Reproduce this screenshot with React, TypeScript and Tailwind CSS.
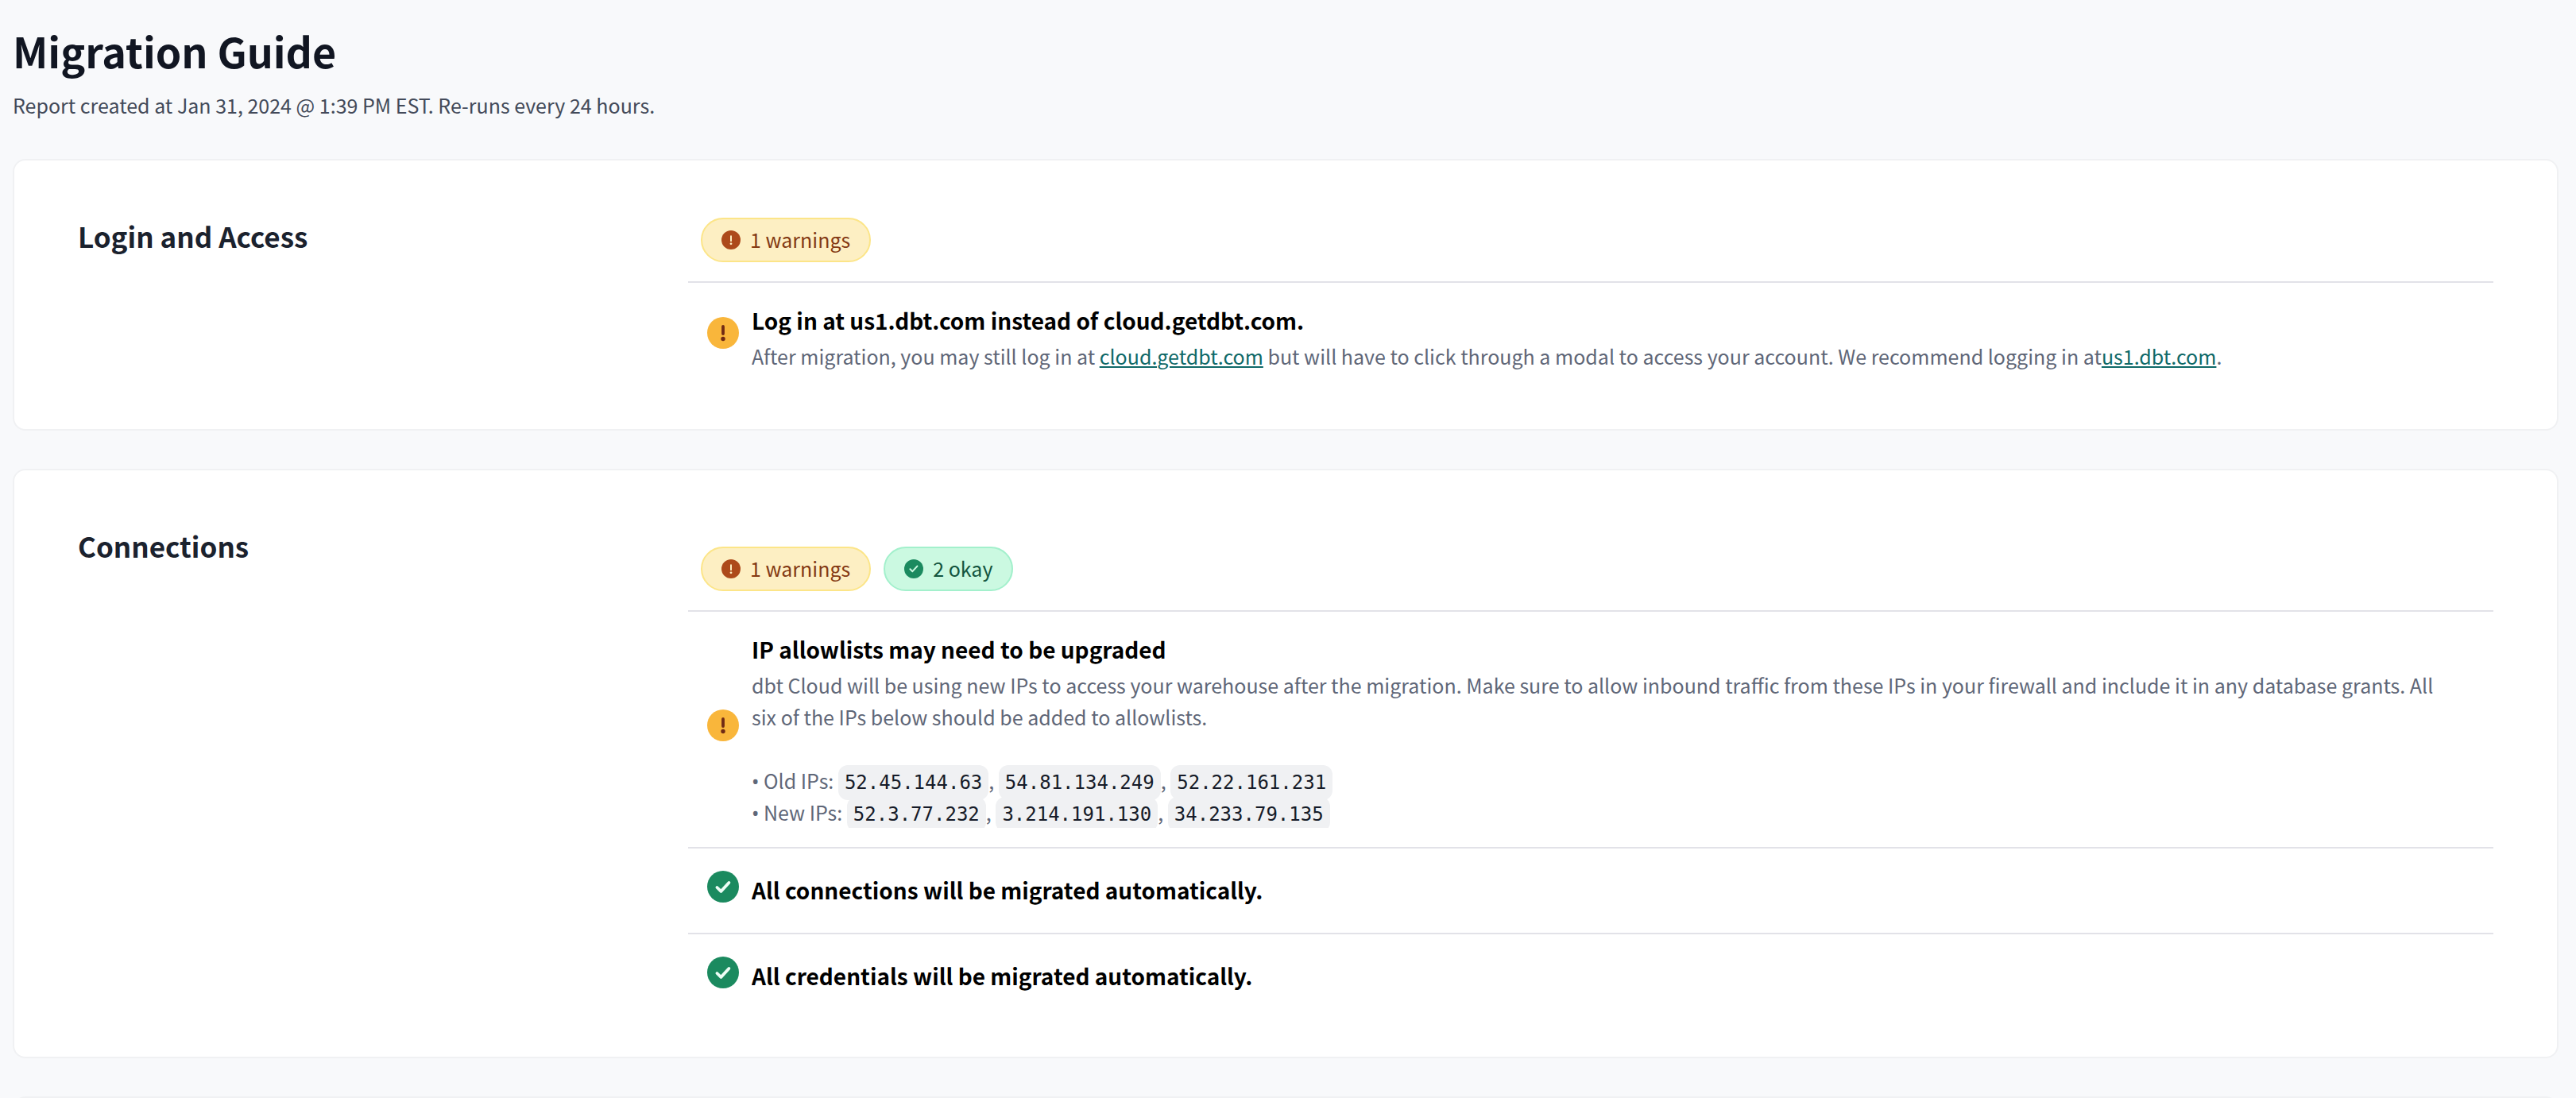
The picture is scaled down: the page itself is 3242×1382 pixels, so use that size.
import type { ReactNode } from "react";

type Tone = "warning" | "okay";

function WarningBadgeIcon() {
  return (
    <svg viewBox="0 0 24 24" className="size-6 shrink-0" aria-hidden="true">
      <circle cx="12" cy="12" r="12" fill="#ad4a1b" />
      <path d="M12 7.2v6" stroke="#fdefc3" strokeWidth="2" strokeLinecap="round" />
      <circle cx="12" cy="16.8" r="1.4" fill="#fdefc3" />
    </svg>
  );
}

function OkayBadgeIcon() {
  return (
    <svg viewBox="0 0 24 24" className="size-6 shrink-0" aria-hidden="true">
      <circle cx="12" cy="12" r="12" fill="#1b8a5f" />
      <path d="M7.4 12.2l3 3 6-6.6" fill="none" stroke="#cbf9e1" strokeWidth="2" strokeLinecap="round" strokeLinejoin="round" />
    </svg>
  );
}

function StatusIcon({ tone }: { tone: Tone }) {
  return (
    <div className="shrink-0 pt-1 pb-3.5">
      {tone === "warning" ? (
        <svg viewBox="0 0 40 40" className="size-10" role="img" aria-label="Warning">
          <circle cx="20" cy="20" r="20" fill="#f9b63b" />
          <path d="M20 12v9" stroke="#702a14" strokeWidth="3.8" strokeLinecap="round" />
          <circle cx="20" cy="27.5" r="2.7" fill="#702a14" />
        </svg>
      ) : (
        <svg viewBox="0 0 40 40" className="size-10" role="img" aria-label="Okay">
          <circle cx="20" cy="20" r="20" fill="#1b8a5f" />
          <path d="M12.4 21l5 4.9 10-10.9" fill="none" stroke="#ecfdf5" strokeWidth="3.8" strokeLinecap="round" strokeLinejoin="round" />
        </svg>
      )}
    </div>
  );
}

function Badge({ tone, children }: { tone: Tone; children: ReactNode }) {
  const colors =
    tone === "warning"
      ? "border-[#fce588] bg-[#fdefc3] text-[#843a14]"
      : "border-[#a3f0cc] bg-[#cbf9e1] text-[#14553f]";
  return (
    <span className={`flex h-14 items-center gap-3 rounded-full border-2 px-6 text-[25px] ${colors}`}>
      {tone === "warning" ? <WarningBadgeIcon /> : <OkayBadgeIcon />}
      {children}
    </span>
  );
}

function Item({ tone, title, children }: { tone: Tone; title: string; children?: ReactNode }) {
  return (
    <li className="flex items-center gap-4 border-t-2 border-[#e2e2e8] py-6 pr-12 pl-6">
      <StatusIcon tone={tone} />
      <div className="min-w-0 flex-1 overflow-hidden">
        <h3 className="pb-0.5 text-[28px] leading-[46px] font-bold text-black">{title}</h3>
        {children && <div className="text-[25px] leading-10 text-[#5f6778]">{children}</div>}
      </div>
    </li>
  );
}

function Card({ title, children }: { title: string; children?: ReactNode }) {
  return (
    <section className="grid grid-cols-4 gap-x-8 rounded-2xl border-2 border-[#f0f1f3] bg-white px-20 py-12">
      <h2 className="pt-6 text-[35px] leading-[46px] font-bold text-[#1b222e]">{title}</h2>
      <div className="col-span-3">{children}</div>
    </section>
  );
}

function TextLink({ href, children }: { href: string; children: ReactNode }) {
  return (
    <a href={href} className="text-[#0f6968] underline decoration-2 underline-offset-2">
      {children}
    </a>
  );
}

function Code({ children }: { children: ReactNode }) {
  return (
    <code className="rounded-xl bg-[#f0f1f3] p-2 font-['DejaVu_Sans_Mono',monospace] text-[24px] leading-none text-[#161b28]">
      {children}
    </code>
  );
}

function IpLine({ label, ips }: { label: string; ips: string[] }) {
  return (
    <li>
      <span className="font-['Noto_Sans',sans-serif] leading-none">•</span> {label}:{" "}
      {ips.map((ip, i) => (
        <span key={ip}>
          {i > 0 && ", "}
          <Code>{ip}</Code>
        </span>
      ))}
    </li>
  );
}

export default function App() {
  return (
    <div className="h-screen overflow-hidden bg-[#f8f9fb] font-['Noto_Sans_CJK_SC',sans-serif]">
      <main className="flex flex-col gap-12 pr-[22px] pl-4">
        <header className="pt-7">
          <h1 className="text-[52px] leading-[72px] font-bold text-[#111622]">Migration Guide</h1>
          <p className="mt-3 text-[25px] leading-10 text-[#434a59]">
            Report created at Jan 31, 2024 @ 1:39 PM EST. Re-runs every 24 hours.
          </p>
        </header>

        <Card title="Login and Access">
          <div className="flex gap-4 px-4 py-6">
            <Badge tone="warning">1 warnings</Badge>
          </div>
          <ul>
            <Item tone="warning" title="Log in at us1.dbt.com instead of cloud.getdbt.com.">
              After migration, you may still log in at{" "}
              <TextLink href="https://cloud.getdbt.com">cloud.getdbt.com</TextLink> but will have to click through a
              modal to access your account. We recommend logging in at
              <TextLink href="https://us1.dbt.com">us1.dbt.com</TextLink>.
            </Item>
          </ul>
        </Card>

        <Card title="Connections">
          <div className="flex gap-4 px-4 pt-12 pb-6">
            <Badge tone="warning">1 warnings</Badge>
            <Badge tone="okay">2 okay</Badge>
          </div>
          <ul>
            <Item tone="warning" title="IP allowlists may need to be upgraded">
              <p>
                dbt Cloud will be using new IPs to access your warehouse after the migration. Make sure to allow inbound
                traffic from these IPs in your firewall and include it in any database grants. All six of the IPs below
                should be added to allowlists.
              </p>
              <ul className="mt-10">
                <IpLine label="Old IPs" ips={["52.45.144.63", "54.81.134.249", "52.22.161.231"]} />
                <IpLine label="New IPs" ips={["52.3.77.232", "3.214.191.130", "34.233.79.135"]} />
              </ul>
            </Item>
            <Item tone="okay" title="All connections will be migrated automatically." />
            <Item tone="okay" title="All credentials will be migrated automatically." />
          </ul>
        </Card>

        <Card title="" />
      </main>
    </div>
  );
}
